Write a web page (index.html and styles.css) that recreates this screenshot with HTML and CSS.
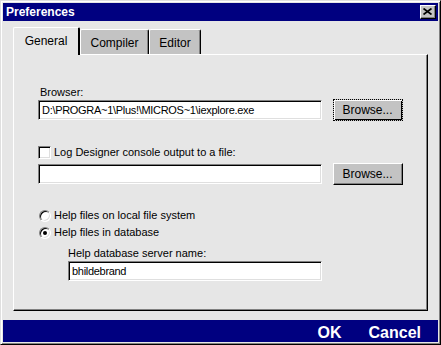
FILE: index.html
```html
<!DOCTYPE html>
<html lang="en">
<head>
    <meta charset="UTF-8">
    <meta name="viewport" content="width=device-width, initial-scale=1.0">
    <title>Preferences</title>
    <link rel="stylesheet" href="styles.css">
</head>
<body>
    <div class="window">
        <!-- title bar -->
        <div class="titlebar">
            <span class="title">Preferences</span>
            <button class="close-btn" aria-label="Close">
                <svg width="9" height="7" viewBox="0 0 9 7">
                    <path d="M0.5 0.5 L8.5 6.5 M8.5 0.5 L0.5 6.5" stroke="#000" stroke-width="1.7" fill="none"/>
                </svg>
            </button>
        </div>

        <div class="dialog-body">
            <div class="tabs">
                <div class="tab active" style="width: 67px;">General</div>
                <div class="tab" style="width: 69px;">Compiler</div>
                <div class="tab" style="width: 52px;">Editor</div>
            </div>

            <div class="panel">
                <div class="label label-browser">Browser:</div>
                <div class="field-row">
                    <div class="text-input">D:\PROGRA~1\Plus!\MICROS~1\iexplore.exe</div>
                    <button class="btn btn-default"><span>Browse...</span></button>
                </div>

                <div class="check-row">
                    <span class="checkbox"></span>
                    <span class="label">Log Designer console output to a file:</span>
                </div>
                <div class="field-row field-row-log">
                    <div class="text-input"></div>
                    <button class="btn"><span>Browse...</span></button>
                </div>

                <div class="radio-row radio-first">
                    <span class="radio"></span>
                    <span class="label">Help files on local file system</span>
                </div>
                <div class="radio-row">
                    <span class="radio checked"></span>
                    <span class="label">Help files in database</span>
                </div>

                <div class="label label-server">Help database server name:</div>
                <div class="text-input server-input">bhildebrand</div>
            </div>
        </div>

        <!-- bottom action bar -->
        <div class="footer">
            <span class="footer-action">OK</span>
            <span class="footer-action">Cancel</span>
        </div>
    </div>
</body>
</html>
```

FILE: styles.css
```css
:root {
    --face: #e6e6e6;
    --button-face: #c3c3c3;
    --shadow: #808080;
    --light: #dfdfdf;
    --title-bg: #000080;
}

* {
    margin: 0;
    padding: 0;
    box-sizing: border-box;
}

body {
    font-family: 'Liberation Sans', Arial, sans-serif;
    font-size: 11px;
    color: #000;
    background: #ffffff;
}

.window {
    width: 441px;
    height: 345px;
    display: flex;
    flex-direction: column;
    background-color: var(--face);
    border: 1px solid;
    border-color: var(--light) #000 #000 var(--light);
    box-shadow: inset 1px 1px #fff, inset -1px -1px var(--shadow);
    padding: 2px;
}

.titlebar {
    height: 18px;
    background-color: var(--title-bg);
    display: flex;
    align-items: center;
    justify-content: space-between;
    padding: 0 2px 0 3px;
}

.title {
    color: #fff;
    font-weight: bold;
    font-size: 12px;
    line-height: 18px;
}

.close-btn {
    width: 16px;
    height: 14px;
    background-color: var(--button-face);
    border: 1px solid;
    border-color: #fff #000 #000 #fff;
    box-shadow: inset -1px -1px var(--shadow);
    display: flex;
    align-items: center;
    justify-content: center;
    padding: 0 1px 1px 0;
}

.close-btn svg {
    display: block;
}

.dialog-body {
    flex: 1;
    display: flex;
    flex-direction: column;
    padding: 6px 10px 9px;
}

.tabs {
    display: flex;
    align-items: flex-end;
    height: 27px;
}

.tab {
    height: 25px;
    padding-top: 6px;
    font-size: 12px;
    line-height: 14px;
    text-align: center;
    background-color: var(--button-face);
    border-top: 1px solid #fff;
    border-left: 1px solid #fff;
    border-right: 1px solid #000;
    border-radius: 2px 2px 0 0;
    box-shadow: inset -1px 0 var(--shadow);
}

.tab.active {
    height: 28px;
    margin-bottom: -1px;
    position: relative;
    z-index: 1;
    background-color: var(--face);
    border-right-width: 2px;
    box-shadow: none;
}

.panel {
    flex: 1;
    border: 1px solid;
    border-color: #fff #000 #000 #fff;
    box-shadow: inset -1px -1px var(--shadow);
    padding-left: 24px;
    display: flex;
    flex-direction: column;
    align-items: flex-start;
}

.label {
    line-height: 13px;
    white-space: nowrap;
}

.label-browser {
    margin-top: 31px;
    margin-left: 2px;
}

.field-row {
    display: flex;
    align-items: center;
    gap: 11px;
    height: 22px;
}

.field-row-log {
    margin-top: 4px;
}

.text-input {
    width: 284px;
    height: 20px;
    background-color: #fff;
    border: 1px solid;
    border-color: var(--shadow) #fff #fff var(--shadow);
    box-shadow: inset 1px 1px #000, inset -1px -1px var(--light);
    padding: 0 3px;
    line-height: 18px;
    letter-spacing: -0.3px;
    white-space: nowrap;
    overflow: hidden;
}

.btn {
    width: 70px;
    height: 22px;
    font-family: inherit;
    font-size: 12px;
    color: #000;
    background-color: var(--button-face);
    border: 1px solid;
    border-color: #fff #000 #000 #fff;
    box-shadow: inset -1px -1px var(--shadow);
    padding: 2px;
}

.btn span {
    display: block;
    height: 100%;
    line-height: 16px;
    padding-right: 1px;
}

.btn-default {
    border: 1px dotted #000;
    box-shadow: inset 1px 1px #fff, inset -1px -1px #000;
}

.check-row,
.radio-row {
    display: flex;
    align-items: center;
    gap: 3px;
    height: 13px;
}

.check-row {
    margin-top: 25px;
}

.checkbox {
    width: 13px;
    height: 13px;
    background-color: #fff;
    border: 1px solid;
    border-color: var(--shadow) #fff #fff var(--shadow);
    box-shadow: inset 1px 1px #000, inset -1px -1px var(--light);
}

.radio-row {
    margin-top: 4px;
}

.radio-first {
    margin-top: 24px;
}

.radio {
    width: 12px;
    height: 12px;
    margin-left: 1px;
    border-radius: 50%;
    background-color: #fff;
    border: 1px solid;
    border-color: var(--shadow) #fff #fff var(--shadow);
    box-shadow: inset 1px 1px #000, inset -1px -1px var(--light);
    display: flex;
    align-items: center;
    justify-content: center;
}

.radio.checked::after {
    content: "";
    width: 4px;
    height: 4px;
    border-radius: 50%;
    background-color: #000;
}

.label-server {
    margin-top: 8px;
    margin-left: 30px;
}

.server-input {
    width: 254px;
    margin-top: 1px;
    margin-left: 30px;
}

.footer {
    height: 22px;
    background-color: var(--title-bg);
    display: flex;
    justify-content: flex-end;
    gap: 27px;
    padding: 3px 17px 0 0;
}

.footer-action {
    color: #fff;
    font-weight: bold;
    font-size: 16px;
    line-height: 19px;
}
```
